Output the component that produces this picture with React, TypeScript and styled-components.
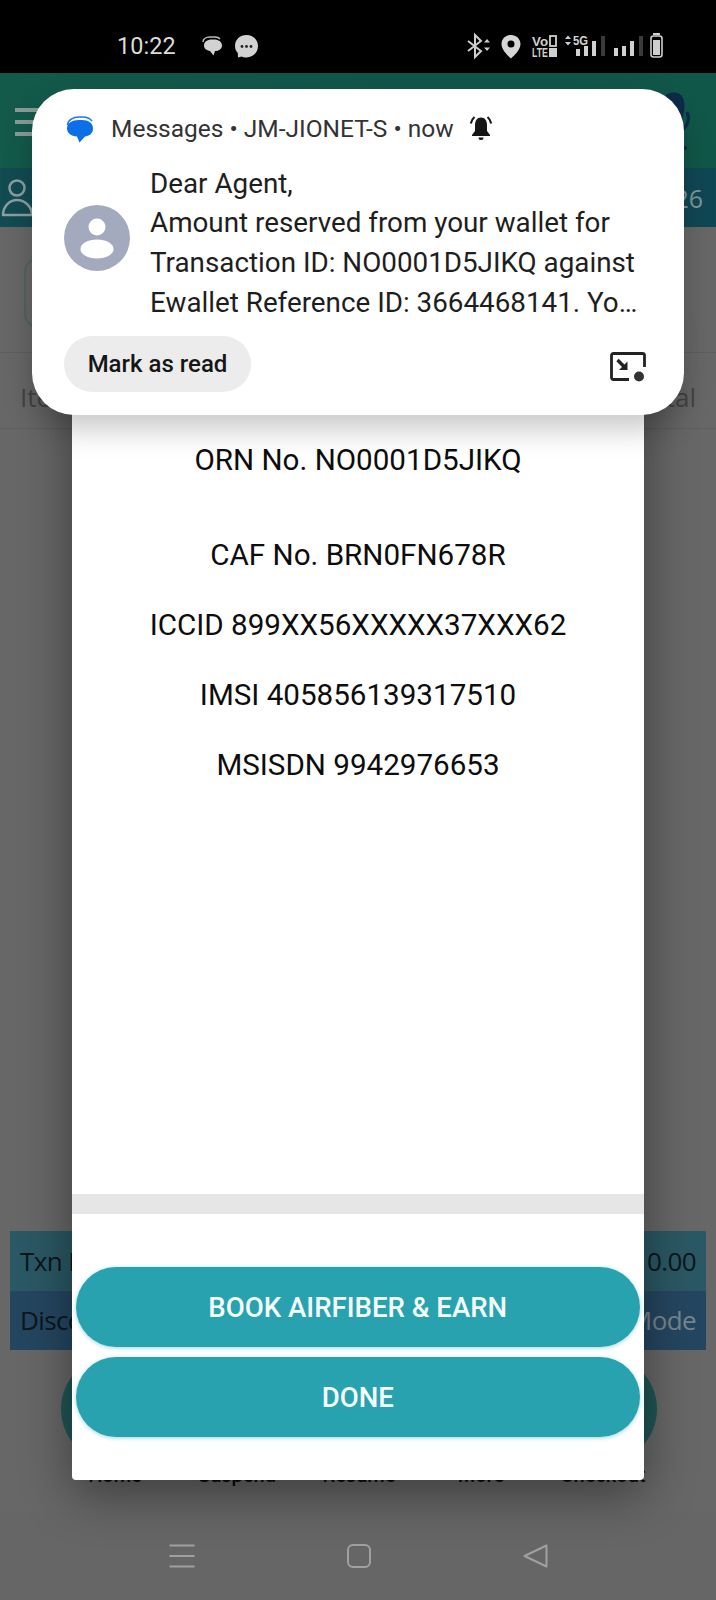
import React from "react";
import styled, { createGlobalStyle } from "styled-components";

const Global = createGlobalStyle`
  html, body { margin: 0; padding: 0; background: #000; }
  body { font-family: "Roboto", "Liberation Sans", sans-serif; }
  * { box-sizing: border-box; }
`;

const Screen = styled.div`
  position: relative;
  width: 716px;
  height: 1600px;
  overflow: hidden;
  display: flex;
  flex-direction: column;
  background: #676767;
`;

/* ---------- status bar ---------- */
const StatusBar = styled.header`
  height: 73px;
  flex: none;
  background: #000;
  display: flex;
  align-items: center;
  padding: 19px 50px 0 117px;
  color: #dcdcdc;
`;
const Clock = styled.span`
  font-size: 23.4px;
  letter-spacing: 0.1px;
  width: 84px;
`;
const StatusNotes = styled.div`
  display: flex;
  align-items: center;
  gap: 11px;
  flex: 1;
`;
const StatusIcons = styled.div`
  display: flex;
  align-items: center;
`;

/* ---------- app behind the dialog ---------- */
const AppHeader = styled.div`
  height: 95px;
  flex: none;
  background: linear-gradient(90deg, #135a4b, #11564a 60%, #115749);
  display: flex;
  align-items: center;
  justify-content: space-between;
  padding: 0 20px 0 15px;
`;
const MenuBars = styled.div`
  display: flex;
  flex-direction: column;
  gap: 8px;
  width: 40px;
  margin-top: 2px;
`;
const MenuBar = styled.i`
  display: block;
  height: 4px;
  background: #8a9a96;
`;
const UserBar = styled.div`
  height: 59px;
  flex: none;
  background: linear-gradient(90deg, #124b52, #104754);
  display: flex;
  align-items: center;
  justify-content: space-between;
  padding: 0 13px 0 1px;
  font-family: "Open Sans", sans-serif;
  font-size: 25px;
  color: #7f989b;
`;
const Content = styled.main`
  flex: 1;
  display: flex;
  flex-direction: column;
  min-height: 0;
`;
const SearchBox = styled.div`
  margin: 30px 40px 0 24px;
  height: 72px;
  flex: none;
  border: 2px solid #4f6464;
  border-radius: 16px;
`;
const ItemsHead = styled.div`
  margin-top: 23px;
  height: 77px;
  flex: none;
  border-top: 1px solid #5f5f5f;
  border-bottom: 1px solid #5f5f5f;
  display: flex;
  justify-content: space-between;
  align-items: center;
  padding: 12px 20px 0;
  font-family: "Open Sans", sans-serif;
  font-size: 26px;
  color: #444;
`;
const Spacer = styled.div`
  flex: 1;
`;
const Summary = styled.div`
  margin: 0 10px;
  flex: none;
  font-family: "Open Sans", sans-serif;
  font-size: 26px;
  letter-spacing: -0.6px;
`;
const SummaryRow = styled.div<{ $bg: string; $valueColor: string }>`
  height: 59.5px;
  padding: 0 10px;
  display: flex;
  align-items: center;
  justify-content: space-between;
  background: ${(p) => p.$bg};
  color: #0b161d;
  span:last-child {
    color: ${(p) => p.$valueColor};
  }
`;
const Actions = styled.div`
  margin: 5px 54px 0;
  display: grid;
  grid-template-columns: repeat(5, 122px);
  flex: none;
`;
const Action = styled.div`
  display: flex;
  flex-direction: column;
  align-items: center;
  font-size: 20px;
  font-weight: 500;
  color: #0c0c0c;
  line-height: 24px;
`;
const ActionDisc = styled.div`
  width: 108px;
  height: 108px;
  border-radius: 50%;
  background: #215555;
`;
const NavBar = styled.nav`
  margin-top: 25px;
  height: 88px;
  flex: none;
  background: #666;
  display: flex;
  align-items: center;
  justify-content: space-between;
  padding: 0 168px 0 169px;
`;

/* ---------- dialog ---------- */
const Dialog = styled.section`
  position: absolute;
  left: 72px;
  top: 300px;
  width: 572px;
  height: 1180px;
  background: #fff;
  border-radius: 0 0 4px 4px;
  box-shadow: 0 14px 50px rgba(0, 0, 0, 0.42);
  display: flex;
  flex-direction: column;
`;
const DialogBody = styled.div`
  flex: 1;
  padding-top: 140px;
  text-align: center;
  color: #0d0d0d;
  font-size: 29.6px;
  line-height: 40px;
`;
const DialogLine = styled.p<{ $gap: number }>`
  margin: 0 0 ${(p) => p.$gap}px;
`;
const Rule = styled.div`
  height: 20px;
  flex: none;
  background: #e6e6e6;
`;
const DialogFooter = styled.div`
  flex: none;
  height: 266px;
  padding: 53px 4px 0 3.5px;
  display: flex;
  flex-direction: column;
  gap: 10px;
`;
const PillButton = styled.button`
  height: 80px;
  border: none;
  border-radius: 40px;
  background: #28a2af;
  color: #f6fdfd;
  font-family: "Roboto", sans-serif;
  font-size: 27.6px;
  font-weight: 500;
  box-shadow: 0 1px 4px rgba(40, 162, 175, 0.45);
`;

/* ---------- notification ---------- */
const Notification = styled.aside`
  position: absolute;
  left: 32px;
  top: 89px;
  width: 652px;
  height: 326px;
  background: #fff;
  border-radius: 42px;
  box-shadow: 0 14px 30px rgba(0, 0, 0, 0.22);
  padding: 23px 32px 0;
  display: flex;
  flex-direction: column;
`;
const NoteHeader = styled.div`
  display: flex;
  align-items: center;
  height: 32px;
  color: #333;
  font-size: 24.5px;
`;
const AppGlyph = styled.span`
  display: flex;
  width: 45px;
  flex: none;
  margin-left: 2px;
  margin-top: 2px;
`;
const BellWrap = styled.span`
  display: flex;
  margin-left: 14px;
`;
const NoteMain = styled.div`
  display: flex;
  align-items: flex-start;
  margin-top: 19.5px;
`;
const Avatar = styled.span`
  display: flex;
  flex: none;
  width: 86px;
  margin-top: 41px;
`;
const NoteText = styled.div`
  font-size: 27.8px;
  line-height: 39.7px;
  color: #1e1e1e;
  white-space: nowrap;
`;
const NoteActions = styled.div`
  margin-top: 14px;
  display: flex;
  align-items: center;
  justify-content: space-between;
  padding-right: 6px;
`;
const MinimizeWrap = styled.span`
  display: flex;
  margin-top: 6px;
`;
const ChipButton = styled.button`
  width: 187px;
  height: 56px;
  border: none;
  border-radius: 28px;
  background: #ececec;
  color: #161616;
  font-family: "Roboto", sans-serif;
  font-size: 24px;
  font-weight: 500;
`;

const Bubble = ({ dots }: { dots?: boolean }) =>
  dots ? (
    <svg width="25" height="25" viewBox="0 0 25 25">
      <path d="M12.5 1C19 1 24 5.600 24 12s-5 11.500-11.500 11.500c-2 0-3.500-.2-5-1L4 23.500 3.800 19C2 17 1 15 1 12 1 5.600 6 1 12.500 1z" fill="#d2d2d2" />
      <circle cx="8" cy="12.500" r="1.400" fill="#222" />
      <circle cx="12.500" cy="12.500" r="1.400" fill="#222" />
      <circle cx="17" cy="12.500" r="1.400" fill="#222" />
    </svg>
  ) : (
    <svg width="22" height="20" viewBox="0 0 22 20">
      <path d="M2 6c0-3 3-5 7-5h5c2 0 4 .8 5 2" fill="none" stroke="#bdbdbd" strokeWidth="1.500" />
      <path d="M3 9.500C3 6 6 3.500 11 3.500h2c4.500 0 8 2.300 8 6s-3.500 5.500-7 5.500l-1.500 4.500L9 15c-3.500-.5-6-2.500-6-5.500z" fill="#d2d2d2" />
    </svg>
  );

const StatusCluster = () => (
  <svg width="199" height="28" viewBox="0 0 199 28">
    {/* bluetooth */}
    <path d="M1 9l13 10-6 6V3l6 6L1 19" fill="none" stroke="#cfcfcf" strokeWidth="2" />
    <path d="M17 10.500l3-3.500 3 3.500zM17 15.500l3 3.500 3-3.500z" fill="#cfcfcf" />
    {/* location */}
    <path fillRule="evenodd" d="M44 3c5.300 0 9.500 3.900 9.500 9 0 5.500-5.500 11-9.500 14.500-4-3.500-9.500-9-9.500-14.500C34.500 6.900 38.700 3 44 3zm0 5.500a3.500 3.500 0 100 7 3.500 3.500 0 000-7z" fill="#d6d6d6" />
    {/* VoD / LTE */}
    <text x="65" y="14" fontFamily="Liberation Sans, sans-serif" fontWeight="700" fontSize="13" fill="#cfcfcf" textLength="16" lengthAdjust="spacingAndGlyphs">Vo</text>
    <rect x="83" y="4" width="6" height="10" fill="none" stroke="#cfcfcf" strokeWidth="1.800" />
    <text x="65" y="25" fontFamily="Liberation Sans, sans-serif" fontWeight="700" fontSize="12" fill="#cfcfcf" textLength="16" lengthAdjust="spacingAndGlyphs">LTE</text>
    <rect x="82" y="16" width="8" height="9" fill="#cfcfcf" />
    {/* up/down + 5G */}
    <path d="M98 7l3-3.500L104 7zM98 10l3 3.500 3-3.500z" fill="#cfcfcf" />
    <text x="106" y="13" fontFamily="Liberation Sans, sans-serif" fontWeight="700" fontSize="12.500" fill="#d4d4d4" textLength="15" lengthAdjust="spacingAndGlyphs">5G</text>
    {/* signal 1 */}
    <rect x="109" y="17" width="4" height="7" fill="#d0d0d0" />
    <rect x="117" y="14" width="4" height="10" fill="#d0d0d0" />
    <rect x="125" y="9" width="4" height="15" fill="#d0d0d0" />
    <rect x="134" y="4" width="4" height="20" fill="#3a3a3a" />
    {/* signal 2 */}
    <rect x="147" y="16" width="4" height="8" fill="#d0d0d0" />
    <rect x="155" y="14" width="4" height="10" fill="#d0d0d0" />
    <rect x="163" y="9" width="4" height="15" fill="#d0d0d0" />
    <rect x="172" y="4" width="4" height="20" fill="#3a3a3a" />
    {/* battery */}
    <rect x="186" y="1" width="7" height="2" fill="#cfcfcf" />
    <rect x="184" y="4" width="11" height="21" rx="2.500" fill="none" stroke="#cfcfcf" strokeWidth="1.600" />
    <rect x="186" y="8" width="7" height="15" fill="#cfcfcf" />
  </svg>
);

const BrandFigure = () => (
  <svg width="36" height="60" viewBox="0 0 36 60">
    <path d="M6 4c6-4 14-3 17 3 3 7 1 16-2 24-3 4-9 3-11-1C6 22 2 10 6 4z" fill="#0d2a4a" />
    <path d="M27 21c3 6 1 14-5 18" fill="none" stroke="#0d2a4a" strokeWidth="3" />
    <circle cx="25" cy="57" r="2" fill="#0d2a4a" />
  </svg>
);

const UserGlyph = () => (
  <svg width="34" height="40" viewBox="0 0 34 40">
    <circle cx="16" cy="10" r="7.500" fill="none" stroke="#8b9fa1" strokeWidth="2.500" />
    <path d="M2 37c0-8 6-15 14-15s15 7 15 15z" fill="none" stroke="#8b9fa1" strokeWidth="2.500" strokeLinejoin="round" />
  </svg>
);

const MessagesGlyph = () => (
  <svg width="28" height="27" viewBox="0 0 28 27">
    <path d="M1.500 9C2 4 7 1 13 1h4c4 0 7 1.500 9 4" fill="none" stroke="#1b78e6" strokeWidth="1.500" />
    <path d="M1 12.500C1 7 6 4 13 4h3c6.500 0 11 3 11 8.500S22.500 20 19 20.500L13.500 26.500 11 20.500C5 20 1 17 1 12.500z" fill="#0c6fe8" />
  </svg>
);

const BellGlyph = () => (
  <svg width="26" height="26" viewBox="0 0 26 26">
    <path d="M13 2.500c-4 0-6 3.500-6 7.500v6l-3 4v1h18v-1l-3-4v-6c0-4-2-7.500-6-7.500z" fill="#161616" />
    <path d="M10.500 22.500h5a2.500 2.500 0 01-5 0z" fill="#161616" />
    <path d="M6.500 2C4.500 3.700 3.200 6 2.800 8.500M19.500 2c2 1.700 3.300 4 3.700 6.500" fill="none" stroke="#161616" strokeWidth="2" />
  </svg>
);

const AvatarGlyph = () => (
  <svg width="66" height="66" viewBox="0 0 66 66">
    <circle cx="33" cy="33" r="33" fill="#a3aabd" />
    <circle cx="33" cy="22" r="8.500" fill="#fff" />
    <ellipse cx="33" cy="44" rx="16.500" ry="9.500" fill="#fff" />
  </svg>
);

const MinimizeGlyph = () => (
  <svg width="36" height="30" viewBox="0 0 36 30">
    <path d="M19 27.500H3.500a2 2 0 01-2-2V3.500a2 2 0 012-2h29a2 2 0 012 2V15" fill="none" stroke="#222" strokeWidth="2.800" />
    <path d="M7.500 8l8 8" stroke="#222" strokeWidth="3.400" />
    <path d="M17.500 9.500V18H9z" fill="#222" />
    <circle cx="29" cy="24.500" r="5" fill="#333" />
  </svg>
);

const NavMenu = () => (
  <svg width="26" height="24" viewBox="0 0 26 24">
    <path d="M0.500 1.500h25M0.500 12h25M0.500 22.500h25" stroke="#a0a0a0" strokeWidth="2" />
  </svg>
);
const NavHome = () => (
  <svg width="24" height="24" viewBox="0 0 24 24">
    <rect x="1" y="1" width="22" height="22" rx="5" fill="none" stroke="#a0a0a0" strokeWidth="2" />
  </svg>
);
const NavBack = () => (
  <svg width="25" height="24" viewBox="0 0 25 24">
    <path d="M23.500 1.500v21L1.500 12z" fill="none" stroke="#a0a0a0" strokeWidth="2" strokeLinejoin="round" />
  </svg>
);

const actions = ["Home", "Suspend", "Resume", "More", "Checkout"];

export default function App() {
  return (
    <Screen>
      <Global />
      <StatusBar>
        <Clock>10:22</Clock>
        <StatusNotes>
          <Bubble />
          <Bubble dots />
        </StatusNotes>
        <StatusIcons>
          <StatusCluster />
        </StatusIcons>
      </StatusBar>
      <AppHeader>
        <MenuBars>
          <MenuBar />
          <MenuBar />
          <MenuBar />
        </MenuBars>
        <BrandFigure />
      </AppHeader>
      <UserBar>
        <UserGlyph />
        <span>26</span>
      </UserBar>
      <Content>
        <SearchBox />
        <ItemsHead>
          <span>Item</span>
          <span>Total</span>
        </ItemsHead>
        <Spacer />
        <Summary>
          <SummaryRow $bg="#2a5864" $valueColor="#0b161d">
            <span>Txn ID</span>
            <span>0.00</span>
          </SummaryRow>
          <SummaryRow $bg="#254660" $valueColor="#76858f">
            <span>Discount</span>
            <span>Mode</span>
          </SummaryRow>
        </Summary>
        <Actions>
          {actions.map((a) => (
            <Action key={a}>
              <ActionDisc />
              {a}
            </Action>
          ))}
        </Actions>
      </Content>
      <NavBar>
        <NavMenu />
        <NavHome />
        <NavBack />
      </NavBar>

      <Dialog>
        <DialogBody>
          <DialogLine $gap={55}>ORN No. NO0001D5JIKQ</DialogLine>
          <DialogLine $gap={30}>CAF No. BRN0FN678R</DialogLine>
          <DialogLine $gap={30}>ICCID 899XX56XXXXX37XXX62</DialogLine>
          <DialogLine $gap={30}>IMSI 405856139317510</DialogLine>
          <DialogLine $gap={30}>MSISDN 9942976653</DialogLine>
        </DialogBody>
        <Rule />
        <DialogFooter>
          <PillButton>BOOK AIRFIBER &amp; EARN</PillButton>
          <PillButton>DONE</PillButton>
        </DialogFooter>
      </Dialog>

      <Notification>
        <NoteHeader>
          <AppGlyph>
            <MessagesGlyph />
          </AppGlyph>
          <span>Messages • JM-JIONET-S • now</span>
          <BellWrap>
            <BellGlyph />
          </BellWrap>
        </NoteHeader>
        <NoteMain>
          <Avatar>
            <AvatarGlyph />
          </Avatar>
          <NoteText>
            Dear Agent,
            <br />
            Amount reserved from your wallet for
            <br />
            Transaction ID: NO0001D5JIKQ against
            <br />
            Ewallet Reference ID: 3664468141. Yo…
          </NoteText>
        </NoteMain>
        <NoteActions>
          <ChipButton>Mark as read</ChipButton>
          <MinimizeWrap>
            <MinimizeGlyph />
          </MinimizeWrap>
        </NoteActions>
      </Notification>
    </Screen>
  );
}
